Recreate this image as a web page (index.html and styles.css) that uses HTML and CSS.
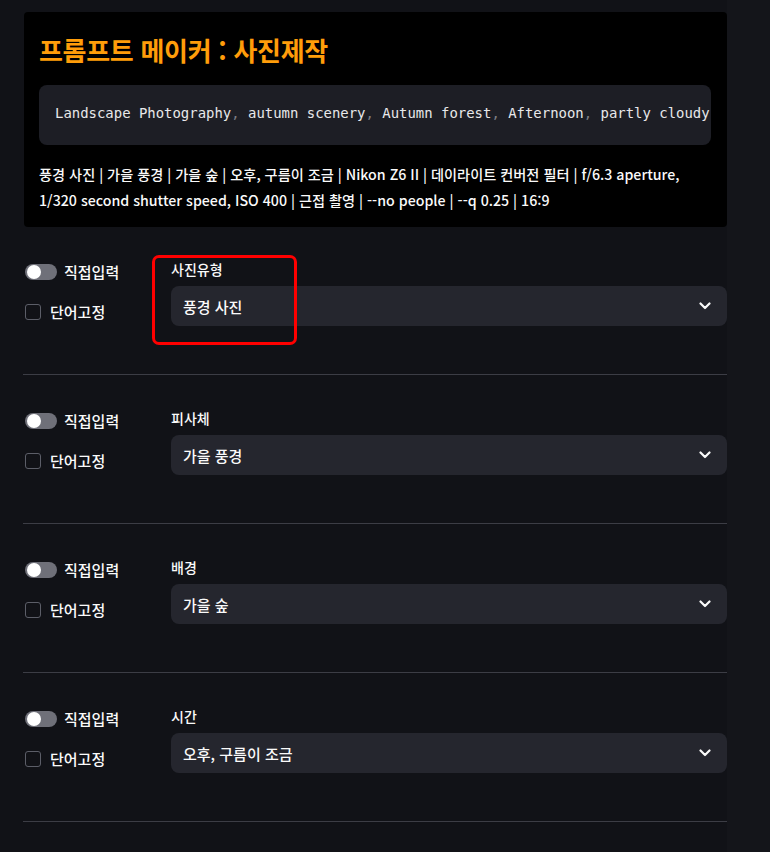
FILE: index.html
```html
<!DOCTYPE html>
<html lang="ko">
<head>
<meta charset="utf-8">
<link rel="stylesheet" href="styles.css">
</head>
<body>
<div class="page">
  <main class="main">
    <section class="result">
      <h1 class="title">프롬프트 메이커 : 사진제작</h1>
      <div class="code"><pre>Landscape Photography<span class="p">,</span> autumn scenery<span class="p">,</span> Autumn forest<span class="p">,</span> Afternoon<span class="p">,</span> partly cloudy</pre></div>
      <p class="desc">풍경 사진 | 가을 풍경 | 가을 숲 | 오후, 구름이 조금 | Nikon Z6 II | 데이라이트 컨버전 필터 | f/6.3 aperture,<br>1/320 second shutter speed, ISO 400 | 근접 촬영 | --no people | --q 0.25 | 16:9</p>
    </section>

    <section class="row first">
      <div class="controls">
        <label class="toggle"><span class="track"><span class="knob"></span></span>직접입력</label>
        <label class="check"><span class="box"></span>단어고정</label>
      </div>
      <div class="field">
        <div class="label">사진유형</div>
        <div class="select"><span>풍경 사진</span><svg class="chev" width="12" height="8" viewBox="0 0 12 8"><path d="M1.5 1.5 L6 6 L10.5 1.5" fill="none" stroke="#fafafa" stroke-width="2.2" stroke-linecap="round" stroke-linejoin="round"/></svg></div>
      </div>
      <div class="highlight"></div>
    </section>
    <hr class="divider">

    <section class="row">
      <div class="controls">
        <label class="toggle"><span class="track"><span class="knob"></span></span>직접입력</label>
        <label class="check"><span class="box"></span>단어고정</label>
      </div>
      <div class="field">
        <div class="label">피사체</div>
        <div class="select"><span>가을 풍경</span><svg class="chev" width="12" height="8" viewBox="0 0 12 8"><path d="M1.5 1.5 L6 6 L10.5 1.5" fill="none" stroke="#fafafa" stroke-width="2.2" stroke-linecap="round" stroke-linejoin="round"/></svg></div>
      </div>
    </section>
    <hr class="divider">

    <section class="row">
      <div class="controls">
        <label class="toggle"><span class="track"><span class="knob"></span></span>직접입력</label>
        <label class="check"><span class="box"></span>단어고정</label>
      </div>
      <div class="field">
        <div class="label">배경</div>
        <div class="select"><span>가을 숲</span><svg class="chev" width="12" height="8" viewBox="0 0 12 8"><path d="M1.5 1.5 L6 6 L10.5 1.5" fill="none" stroke="#fafafa" stroke-width="2.2" stroke-linecap="round" stroke-linejoin="round"/></svg></div>
      </div>
    </section>
    <hr class="divider">

    <section class="row">
      <div class="controls">
        <label class="toggle"><span class="track"><span class="knob"></span></span>직접입력</label>
        <label class="check"><span class="box"></span>단어고정</label>
      </div>
      <div class="field">
        <div class="label">시간</div>
        <div class="select"><span>오후, 구름이 조금</span><svg class="chev" width="12" height="8" viewBox="0 0 12 8"><path d="M1.5 1.5 L6 6 L10.5 1.5" fill="none" stroke="#fafafa" stroke-width="2.2" stroke-linecap="round" stroke-linejoin="round"/></svg></div>
      </div>
    </section>
    <hr class="divider">
  </main>
  <aside class="strip"></aside>
</div>
</body>
</html>
```
FILE: styles.css
```css
html, body {
  margin: 0;
  padding: 0;
  background: #111217;
  color: #fafafa;
  font-family: "Noto Sans CJK KR Medium", "Noto Sans CJK KR", "Noto Sans", sans-serif;
}
.page {
  display: flex;
  min-height: 852px;
  overflow: hidden;
}
.main {
  width: 703px;
  padding-left: 24px;
  flex: none;
}
.strip {
  flex: 1;
  background: #14151a;
}
.result {
  margin-top: 12px;
  height: 215px;
  box-sizing: border-box;
  background: #000;
  border-radius: 4px;
  padding: 22px 16px 0 15px;
}
.title {
  margin: 0;
  font-family: "Noto Sans CJK KR", "Noto Sans", sans-serif;
  font-size: 26px;
  line-height: 31px;
  font-weight: 700;
  color: #ff9d0a;
  letter-spacing: -0.3px;
}
.code {
  margin-top: 20px;
  height: 60px;
  box-sizing: border-box;
  background: #1d1e25;
  border-radius: 8px;
  padding: 18px 0 0 16px;
  overflow: hidden;
}
.code pre {
  margin: 0;
  font-family: "DejaVu Sans Mono", "Liberation Mono", monospace;
  font-size: 13.95px;
  line-height: 20px;
  color: #e8e8ea;
  white-space: pre;
}
.code .p {
  color: #7d7e85;
}
.desc {
  margin: 16px 0 0;
  font-size: 14.2px;
  line-height: 26px;
  color: #fafafa;
  white-space: nowrap;
}
.row {
  position: relative;
  display: flex;
  padding-top: 33px;
  padding-bottom: 48px;
}
.row.first {
  padding-top: 32px;
}
.controls {
  width: 147px;
  flex: none;
  display: flex;
  flex-direction: column;
  padding-top: 5px;
}
.toggle, .check {
  display: flex;
  align-items: center;
  font-size: 15px;
  line-height: 16px;
  color: #fafafa;
}
.toggle {
  gap: 7px;
  margin-left: 1px;
}
.track {
  width: 32px;
  height: 16px;
  border-radius: 8px;
  background: #6f7079;
  position: relative;
  flex: none;
}
.knob {
  position: absolute;
  left: 2px;
  top: 1px;
  width: 14px;
  height: 14px;
  border-radius: 50%;
  background: #fff;
}
.check {
  margin-top: 24px;
  margin-left: 1px;
  gap: 9px;
}
.box {
  width: 14px;
  height: 14px;
  border: 1px solid #5c5e68;
  border-radius: 3px;
  flex: none;
}
.field {
  flex: 1;
}
.label {
  font-size: 14px;
  line-height: 20px;
  color: #fafafa;
}
.select {
  margin-top: 7px;
  height: 40px;
  box-sizing: border-box;
  background: #25262e;
  border-radius: 8px;
  display: flex;
  align-items: center;
  justify-content: space-between;
  padding: 0 16px 0 12px;
  font-size: 15px;
}
.chev {
  display: block;
}
.highlight {
  position: absolute;
  left: 128px;
  top: 28px;
  width: 139px;
  height: 84px;
  border: 3px solid #ff0000;
  border-radius: 7px;
}
.divider {
  margin: 0 0 0 -1px;
  border: 0;
  height: 1px;
  background: #3c3d45;
}
```
